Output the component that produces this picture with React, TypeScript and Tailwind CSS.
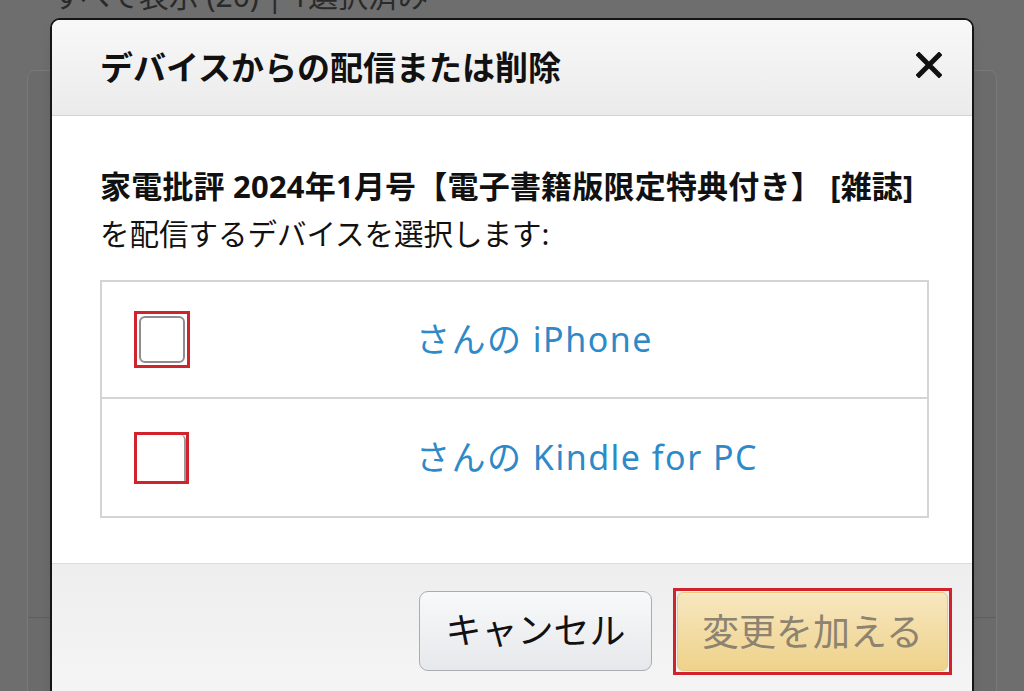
import { FC } from 'react'

const font = { fontFamily: '"Noto Sans", "Noto Sans CJK JP", sans-serif' }

type Device = { name: string; tall: boolean }

const devices: Device[] = [
  { name: 'さんの iPhone', tall: true },
  { name: 'さんの Kindle for PC', tall: false },
]

// checkbox with the red highlight frame around it
const MarkedCheckbox: FC<{ tall: boolean }> = ({ tall }) => {
  if (tall) {
    return (
      <div className="w-[56px] h-[57px] border-[3px] border-[#d1232c] p-[2px] bg-white">
        <div className="w-full h-full rounded-[6px] border-2 border-[#8e8e8e] bg-white" />
      </div>
    )
  }
  return (
    <div className="w-[55px] h-[52px] border-[3px] border-[#d1232c] bg-white flex justify-end">
      <div className="w-[20px] h-full rounded-tr-[5px] border-r-2 border-[#9a9a9a]" />
    </div>
  )
}

const App: FC = () => {
  return (
    <div className="relative w-[1024px] h-[691px] overflow-hidden bg-[#6e6e6e]" style={font}>
      {/* page behind the dialog */}
      <div className="-mt-[21px] pl-[52px] text-[30px] leading-[34px] text-[#2a2a2a] whitespace-nowrap">
        すべて表示 (20) | 1選択済み
      </div>
      <div className="mt-[57px] mx-[27px] h-[700px] rounded-lg border border-[#7a7a7a] bg-[#6b6b6b] flex flex-col">
        <div className="h-[547px] border-b border-[#5e5e5e]" />
      </div>

      {/* dialog */}
      <div className="absolute left-[50px] top-[18px] w-[924px] h-[720px] rounded-t-[10px] border-2 border-[#151515] bg-white overflow-hidden shadow-lg flex flex-col">
        <div className="h-[96px] shrink-0 flex items-center justify-between pl-[48px] pr-[30px] bg-gradient-to-b from-[#f8f8f8] to-[#ebebeb] border-b border-[#d3d3d3]">
          <h2 className="text-[33px] font-bold text-[#111]">デバイスからの配信または削除</h2>
          <svg width="26" height="26" viewBox="0 0 26 26" className="mt-[-6px]">
            <path d="M3 3 L23 23 M23 3 L3 23" stroke="#111" strokeWidth="5" strokeLinecap="square" />
          </svg>
        </div>

        <div className="pt-[47px] pb-[45px] pl-[48px] pr-[43px]">
          <p className="text-[31px] leading-[47px] font-bold text-[#111] whitespace-nowrap tracking-[0.2px]">
            家電批評 2024年1月号【電子書籍版限定特典付き】 [雑誌]
          </p>
          <p className="text-[29.5px] leading-[47px] text-[#111]">を配信するデバイスを選択します:</p>

          <div className="mt-[23px] border-2 border-[#d4d4d4] divide-y-2 divide-[#d4d4d4]">
            {devices.map((d) => (
              <div key={d.name} className="h-[117px] flex items-center">
                <div className="w-[314px] pl-[32px] flex items-center">
                  <MarkedCheckbox tall={d.tall} />
                </div>
                <span className="text-[34px] tracking-[1.5px] text-[#2e89c8]">{d.name}</span>
              </div>
            ))}
          </div>
        </div>

        <div className="flex-1 border-t border-[#dcdcdc] bg-gradient-to-b from-[#eeeeee] to-[#f7f7f7] pt-[24px] pr-[20px] flex justify-end items-start gap-[21px]">
          <div className="mt-[3px] w-[233px] h-[80px] rounded-[9px] border border-[#a9adb3] bg-gradient-to-b from-[#f8f9fa] to-[#e6e8eb] flex items-center justify-center text-[36px] text-[#111]">
            キャンセル
          </div>
          <div className="w-[279px] h-[87px] border-[3px] border-[#d1232c] p-[1px]">
            <div className="w-full h-full rounded-[6px] border border-[#e6c983] bg-gradient-to-b from-[#f7e7c0] to-[#efd28a] flex items-center justify-center text-[37px] text-[#8c8370]">
              変更を加える
            </div>
          </div>
        </div>
      </div>
    </div>
  )
}

export default App
